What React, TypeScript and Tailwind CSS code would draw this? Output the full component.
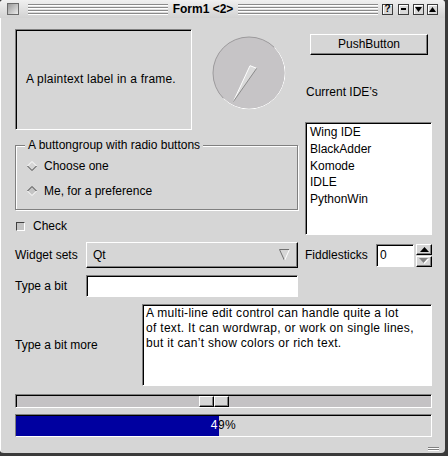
import React from "react";

const sunken =
  "border border-t-[#808080] border-l-[#808080] border-r-white border-b-white shadow-[inset_1px_1px_0_#000]";
const raised =
  "border border-t-white border-l-white border-r-black border-b-black shadow-[inset_-1px_-1px_0_#808080]";

function Grooves() {
  return (
    <div className="flex-1 flex flex-col gap-[1px]">
      <div className="h-px bg-[#8a8a8a] mb-px shadow-[0_1px_0_#fff]" />
      <div className="h-px bg-[#8a8a8a] mb-px shadow-[0_1px_0_#fff]" />
      <div className="h-px bg-[#8a8a8a] mb-px shadow-[0_1px_0_#fff]" />
      <div className="h-px bg-[#8a8a8a] mb-px shadow-[0_1px_0_#fff]" />
    </div>
  );
}

function TBtn({ children }: { children: React.ReactNode }) {
  return (
    <div className="w-[11px] h-[11px] border border-[#3c3c3c] bg-[#d8d8d8] shadow-[inset_1px_1px_0_#fff] flex items-center justify-center">
      {children}
    </div>
  );
}

function TitleBar() {
  return (
    <div className="h-[18px] flex items-center pl-[7px] pr-[7px] bg-linear-to-b from-[#f0f0f0] to-[#d2d2d2]">
      <div className="w-[12px] h-[12px] border border-[#6a6a6a] bg-linear-to-br from-[#9a9a9a] to-[#ececec]" />
      <div className="ml-[9px] flex-1 flex">
        <Grooves />
      </div>
      <div className="px-[5px] font-bold text-[12px] leading-[14px] whitespace-pre">Form1 {"<2>"}</div>
      <div className="flex-1 flex">
        <Grooves />
      </div>
      <div className="ml-[4px] flex items-center">
        <TBtn>
          <span className="text-[10px] font-bold leading-[10px]">?</span>
        </TBtn>
        <div className="w-[5px]" />
        <TBtn>
          <div className="w-[5px] h-[2px] bg-black" />
        </TBtn>
        <div className="w-[4px]" />
        <TBtn>
          <svg width="7" height="5" viewBox="0 0 7 5">
            <polygon points="0,0 7,0 3.5,5" fill="#000" />
          </svg>
        </TBtn>
        <div className="w-[3px]" />
        <TBtn>
          <svg width="7" height="5" viewBox="0 0 7 5">
            <polygon points="0,5 7,5 3.5,0" fill="#000" />
          </svg>
        </TBtn>
      </div>
    </div>
  );
}

function Dial() {
  return (
    <svg width="76" height="76" viewBox="0 0 76 76">
      <circle cx="37" cy="37" r="36" fill="#c6c4c6" stroke="#9c9a9c" strokeWidth="1" />
      <path d="M62.5 11.5 A36 36 0 0 1 11.5 62.5" fill="none" stroke="#ffffff" strokeWidth="1" />
      <polygon points="38,29.7 44.7,32.3 21.3,65.7" fill="#dadada" />
      <line x1="38" y1="29.7" x2="21.3" y2="65.7" stroke="#ffffff" strokeWidth="1" />
      <line x1="38" y1="29.7" x2="44.7" y2="32.3" stroke="#ffffff" strokeWidth="1" />
      <line x1="44.7" y1="32.3" x2="21.3" y2="65.7" stroke="#8a8a8a" strokeWidth="1" />
    </svg>
  );
}

function Diamond({ on }: { on: boolean }) {
  const top = on ? "#404040" : "#ffffff";
  const bot = on ? "#ffffff" : "#404040";
  return (
    <svg width="10" height="10" viewBox="0 0 10 10">
      <polygon points="5,0.5 9.5,5 5,9.5 0.5,5" fill={on ? "#c4c4c4" : "#d6d6d6"} />
      <polyline points="0.5,5 5,0.5 9.5,5" fill="none" stroke={top} strokeWidth="1" />
      <polyline points="0.5,5 5,9.5 9.5,5" fill="none" stroke={bot} strokeWidth="1" />
    </svg>
  );
}

function GroupBox() {
  return (
    <div className="mt-[15px] relative h-[65px] w-[283px] border border-[#808080] shadow-[inset_1px_1px_0_#fff,1px_1px_0_#fff]">
      <div className="absolute -top-[8px] left-[9px] px-[3px] bg-[#d6d6d6] leading-[15px]">
        A buttongroup with radio buttons
      </div>
      <div className="pt-[12px] pl-[11px] flex flex-col">
        <div className="h-[16px] flex items-center gap-[7px]">
          <Diamond on={false} />
          <span>Choose one</span>
        </div>
        <div className="mt-[9px] h-[16px] flex items-center gap-[7px]">
          <Diamond on={true} />
          <span>Me, for a preference</span>
        </div>
      </div>
    </div>
  );
}

export default function App() {
  const items = ["Wing IDE", "BlackAdder", "Komode", "IDLE", "PythonWin"];
  return (
    <div className="w-[448px] h-[456px] bg-[#3a3a3a] font-['Liberation_Sans',Arial,Helvetica,sans-serif] text-[12px] leading-[15px] text-black">
      <div className="relative w-[445px] h-[453px] overflow-hidden rounded-[4px] bg-[#d6d6d6] shadow-[inset_1px_1px_0_#fff]">
        <TitleBar />
        <div className="pl-[15px]">
          <div className="mt-[11px] flex">
            <div className="w-[283px] flex flex-col">
              <div className="flex h-[101px]">
                <div className={`w-[177px] h-[101px] ${sunken} flex items-center pl-[10px] tracking-[0.2px]`}>
                  A plaintext label in a frame.
                </div>
                <div className="ml-[20px] mt-[7px]">
                  <Dial />
                </div>
              </div>
              <GroupBox />
              <div className="mt-[9px] h-[15px] flex items-center gap-[8px]">
                <div className="ml-[1px] w-[9px] h-[9px] border border-t-[#404040] border-l-[#404040] border-r-white border-b-white bg-[#c4c4c4]" />
                <span>Check</span>
              </div>
              <div className="mt-[8px] h-[26px] flex items-center">
                <div className="w-[71px]">Widget sets</div>
                <div className={`w-[212px] h-[26px] ${raised} bg-[#d6d6d6] flex items-center pl-[6px] pr-[7px]`}>
                  <span className="flex-1">Qt</span>
                  <svg width="11" height="12" viewBox="0 0 11 12">
                    <line x1="0.5" y1="0.5" x2="10.5" y2="0.5" stroke="#707070" />
                    <line x1="0.5" y1="0.5" x2="5.5" y2="11.5" stroke="#707070" />
                    <line x1="10.5" y1="0.5" x2="5.5" y2="11.5" stroke="#ffffff" />
                  </svg>
                </div>
              </div>
            </div>
            <div className="ml-[7px] w-[127px] flex flex-col">
              <div className={`mt-[5px] ml-[5px] w-[118px] h-[21px] ${raised} bg-[#d6d6d6] flex items-center justify-center`}>
                PushButton
              </div>
              <div className="mt-[30px] pl-[1px] h-[15px]">Current IDE’s</div>
              <div className={`mt-[22px] h-[113px] w-[127px] bg-white ${sunken} pl-[4px] pt-[1px]`}>
                {items.map((t) => (
                  <div key={t} className="h-[16.8px] leading-[16.8px]">
                    {t}
                  </div>
                ))}
              </div>
              <div className="mt-[7px] h-[26px] flex items-center">
                <div className="w-[71px]">Fiddlesticks</div>
                <div className={`w-[38px] h-[23px] bg-white ${sunken} flex items-center pl-[3px]`}>0</div>
                <div className="ml-[2px] w-[16px] flex flex-col gap-[1px]">
                  <div className={`h-[11px] ${raised} bg-[#d6d6d6] flex items-center justify-center`}>
                    <svg width="9" height="5" viewBox="0 0 9 5">
                      <polygon points="0,5 9,5 4.5,0" fill="#000" />
                    </svg>
                  </div>
                  <div className={`h-[11px] ${raised} bg-[#d6d6d6] flex items-center justify-center`}>
                    <svg width="10" height="6" viewBox="0 0 10 6">
                      <polygon points="1,1 10,1 5.5,6" fill="#fff" />
                      <polygon points="0,0 9,0 4.5,5" fill="#808080" />
                    </svg>
                  </div>
                </div>
              </div>
            </div>
          </div>
          <div className="mt-[7px] h-[22px] flex items-center">
            <div className="w-[71px]">Type a bit</div>
            <div className={`w-[212px] h-[22px] bg-white ${sunken}`} />
          </div>
          <div className="mt-[7px] h-[82px] flex items-center">
            <div className="w-[127px]">Type a bit more</div>
            <div className={`w-[290px] h-[82px] bg-white ${sunken} pl-[3px] pt-[1px] leading-[15px] tracking-[0.3px]`}>
              <div>A multi-line edit control can handle quite a lot</div>
              <div>of text. It can wordwrap, or work on single lines,</div>
              <div>but it can’t show colors or rich text.</div>
            </div>
          </div>
          <div className={`mt-[8px] h-[14px] w-[417px] relative bg-[#c4c2c4] ${sunken}`}>
            <div className="absolute left-[183px] top-[1px] flex">
              <div className={`w-[15px] h-[11px] ${raised} bg-[#d6d6d6]`} />
              <div className={`w-[15px] h-[11px] ${raised} bg-[#d6d6d6]`} />
            </div>
          </div>
          <div className={`mt-[6px] h-[23px] w-[417px] relative bg-[#d6d6d6] ${sunken}`}>
            <div className="absolute left-0 top-[1px] bottom-0 w-[203px] bg-[#0000a0]" />
            <div className="absolute inset-0 flex items-center justify-center tracking-[0.5px]">
              <span className="text-white">4</span>
              <span className="text-black">9%</span>
            </div>
          </div>
        </div>
        <div className="absolute left-[428px] top-[447px] w-[11px] flex flex-col">
          <div className="h-px bg-[#808080]" />
          <div className="h-px bg-white" />
          <div className="h-px bg-[#808080]" />
          <div className="h-px bg-white" />
        </div>
      </div>
    </div>
  );
}
